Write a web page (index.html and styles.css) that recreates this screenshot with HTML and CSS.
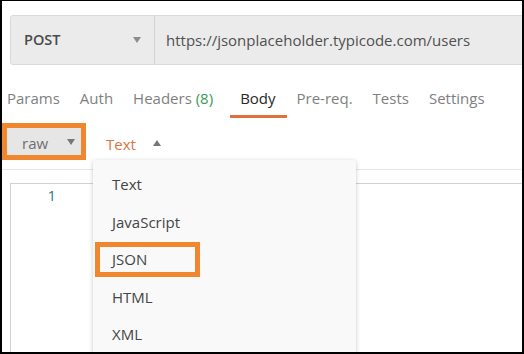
FILE: index.html
```html
<!DOCTYPE html>
<html>
<head>
<meta charset="utf-8">
<link rel="stylesheet" href="styles.css">
</head>
<body>
<div class="frame">
  <div class="urlbar">
    <div class="method"><span class="method-name">POST</span><span class="caret-down"></span></div>
    <div class="url">https://jsonplaceholder.typicode.com/users</div>
  </div>
  <div class="tabs">
    <div class="tab">Params</div>
    <div class="tab">Auth</div>
    <div class="tab">Headers <span class="count">(8)</span></div>
    <div class="tab active">Body</div>
    <div class="tab">Pre-req.</div>
    <div class="tab">Tests</div>
    <div class="tab">Settings</div>
  </div>
  <div class="bodyrow">
    <div class="mark-box">
      <div class="raw-select"><span class="raw-label">raw</span><span class="caret-down"></span></div>
    </div>
    <div class="type-select"><span class="type-label">Text</span><span class="caret-up"></span></div>
  </div>
  <div class="content">
    <div class="editor">
      <div class="gutter">1</div>
    </div>
  </div>
  <div class="menu">
    <div class="menu-item">Text</div>
    <div class="menu-item">JavaScript</div>
    <div class="menu-item marked">JSON</div>
    <div class="menu-item">HTML</div>
    <div class="menu-item">XML</div>
  </div>
</div>
</body>
</html>
```
FILE: styles.css
```css
*, *::before, *::after { box-sizing: border-box; }
html, body { margin: 0; padding: 0; background: #fff; }
.frame {
  position: relative;
  width: 524px;
  height: 354px;
  border: 2px solid #000;
  border-top-width: 1px;
  overflow: hidden;
  background: #fff;
  font-family: "Open Sans", "Liberation Sans", sans-serif;
  font-size: 15px;
  line-height: 20px;
  color: #505050;
}
.urlbar {
  display: flex;
  height: 50px;
  margin: 14px -6px 0 8px;
  background: #ebebeb;
  border: 1px solid #d9d9d9;
  border-radius: 3px;
}
.method {
  width: 144px;
  display: flex;
  align-items: center;
  padding-left: 13px;
  border-right: 1px solid #d2d2d2;
}
.method-name { font-weight: 600; color: #4a4a4a; flex: 1; font-size: 14.5px; }
.method .caret-down { margin-right: 13px; border-top-color: #8c8c8c; }
.caret-down {
  width: 0; height: 0;
  border-left: 4.5px solid transparent;
  border-right: 4.5px solid transparent;
  border-top: 6px solid #777;
}
.caret-up {
  width: 0; height: 0;
  border-left: 4.5px solid transparent;
  border-right: 4.5px solid transparent;
  border-bottom: 6px solid #777;
}
.url {
  display: flex;
  align-items: center;
  padding-left: 11px;
  color: #505050;
  white-space: nowrap;
}
.tabs {
  display: flex;
  margin: 23px 0 0 -5px;
}
.tab {
  padding: 0 10px 7px;
  line-height: 20px;
  color: #7f7f7f;
  border-bottom: 3px solid transparent;
  white-space: nowrap;
}
.tab .count { color: #3a9a55; }
.tab.active { color: #282828; border-bottom-color: #e0703c; margin-left: 7px; padding-right: 11px; }
.bodyrow {
  display: flex;
  align-items: center;
  margin-top: 5px;
  height: 37px;
}
.mark-box {
  width: 84px;
  height: 37px;
  border: 5px solid #f0872f;
}
.raw-select {
  height: 100%;
  background: #e6e6e6;
  display: flex;
  align-items: center;
  padding: 3px 6px 0 15px;
  color: #6e6e6e;
}
.raw-select .caret-down { margin-top: -3px; }
.raw-label { flex: 1; }
.type-select {
  display: flex;
  align-items: center;
  margin-left: 20px;
  padding-top: 5px;
}
.type-select .caret-up { margin-top: -3px; }
.type-label { color: #d9763f; margin-right: 17px; }
.content {
  margin-top: 9px;
  border-top: 1px solid #e6e6e6;
  padding: 13px 0 0 8px;
}
.editor {
  height: 200px;
  border-top: 1px solid #d2d2d2;
  border-left: 1px solid #d2d2d2;
}
.gutter {
  width: 45px;
  padding-top: 1px;
  text-align: right;
  line-height: 20px;
  color: #2c7a8b;
}
.menu {
  position: absolute;
  left: 91px;
  top: 159px;
  width: 263px;
  height: 220px;
  padding-top: 6px;
  background: #f9f9f9;
  border-radius: 3px;
  box-shadow: 0 1px 4px rgba(0,0,0,0.22);
}
.menu-item {
  position: relative;
  height: 37.5px;
  line-height: 37.5px;
  padding-left: 19px;
  color: #454545;
}
.menu-item.marked::after {
  content: "";
  position: absolute;
  left: 2px;
  top: 1px;
  width: 105px;
  height: 35px;
  border: 5px solid #f0872f;
}
```
